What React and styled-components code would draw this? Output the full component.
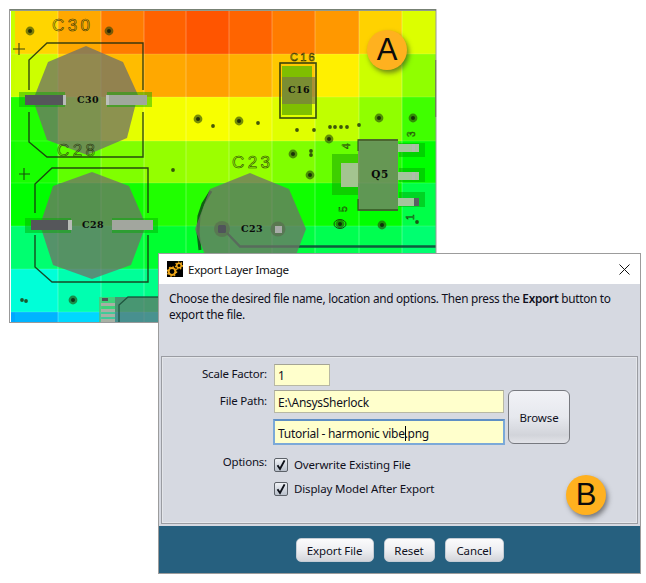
import React from "react";
import styled, { createGlobalStyle } from "styled-components";

const Global = createGlobalStyle`
  html, body { margin: 0; padding: 0; background: #fff; }
  #root { width: 646px; height: 583px; overflow: hidden; }
`;

const Canvas = styled.div`
  position: relative;
  width: 646px;
  height: 583px;
  background: #fff;
  font-family: "Noto Sans", "Open Sans", sans-serif;
`;

const BoardFrame = styled.svg`
  position: absolute;
  left: 9px;
  top: 9px;
  display: block;
`;

const Badge = styled.div`
  position: absolute;
  left: ${(p) => p.$x}px;
  top: ${(p) => p.$y}px;
  width: 40px;
  height: 40px;
  border-radius: 50%;
  background: #ffb11f;
  box-shadow: 2px 3px 5px rgba(40, 40, 40, 0.55);
  display: flex;
  align-items: center;
  justify-content: center;
  font-family: "Liberation Sans", sans-serif;
  font-size: 31px;
  color: #0c0c0c;
  z-index: 3;
`;

const Dialog = styled.div`
  position: absolute;
  left: 158px;
  top: 253px;
  width: 483px;
  height: 321px;
  box-sizing: border-box;
  border: 1px solid #9c9c9c;
  background: #d6d9e1;
  display: flex;
  flex-direction: column;
  color: #10101c;
  z-index: 2;
`;

const TitleBar = styled.div`
  height: 30px;
  flex: none;
  background: #fff;
  display: flex;
  align-items: center;
  padding: 0 8px;
  gap: 5px;
`;

const TitleText = styled.div`
  flex: 1;
  font-size: 11.6px;
  letter-spacing: -0.32px;
  color: #111;
`;

const CloseIcon = styled.svg`
  width: 11px;
  height: 11px;
  margin-right: 2px;
`;

const Intro = styled.p`
  margin: 0;
  height: 72px;
  flex: none;
  box-sizing: border-box;
  padding: 6px 20px 0 10px;
  font-size: 11.8px;
  line-height: 16px;
  letter-spacing: -0.28px;
  b { font-weight: 600; }
`;

const Panel = styled.div`
  flex: 1;
  margin: 0 2px 2px;
  border: 1px solid #9a9ca2;
  box-shadow: inset 0 0 0 1px #e4e6ea;
  padding: 7px 0 0 0;
  display: flex;
  flex-direction: column;
`;

const Row = styled.div`
  display: flex;
  align-items: flex-start;
  margin-bottom: ${(p) => p.$gap || 0}px;
`;

const Label = styled.div`
  width: 105px;
  flex: none;
  margin-right: 7px;
  text-align: right;
  font-size: 11.5px;
  line-height: 16px;
  letter-spacing: -0.2px;
  padding-top: ${(p) => p.$top || 0}px;
`;

const Field = styled.div`
  box-sizing: border-box;
  width: ${(p) => p.$w}px;
  height: ${(p) => p.$h}px;
  margin-left: ${(p) => p.$ml || 0}px;
  border: ${(p) => (p.$focus ? "2px solid #7ba9d8" : "1px solid #b8b8a4")};
  border-top-color: ${(p) => (p.$focus ? "#5f8fc4" : "#a4a494")};
  background: #ffffcc;
  font-size: 12px;
  line-height: ${(p) => p.$h - 2}px;
  padding: 1px 0 0 3px;
  letter-spacing: -0.28px;
  white-space: nowrap;
`;

const Caret = styled.span`
  display: inline-block;
  width: 1px;
  height: 15px;
  background: #000;
  vertical-align: -3px;
  margin: 0 -1px 0 0;
`;

const PathFields = styled.div`
  display: flex;
  flex-direction: column;
  gap: 6px;
`;

const PathGroup = styled.div`
  display: flex;
  align-items: flex-start;
  gap: 3px;
`;

const Browse = styled.button`
  width: 62px;
  height: 54px;
  box-sizing: border-box;
  padding: 0;
  border: 1px solid #77797f;
  border-radius: 6px;
  background: linear-gradient(#f1f2f6 0%, #e6e8ee 50%, #d2d4da 85%, #e2e3e8 100%);
  font: inherit;
  font-size: 11.5px;
  color: #10101c;
  letter-spacing: -0.1px;
`;

const Check = styled.label`
  display: flex;
  align-items: center;
  gap: 6px;
  padding-top: ${(p) => p.$pt || 0}px;
  font-size: 11.5px;
  line-height: 16px;
  letter-spacing: -0.15px;
`;

const Box = styled.span`
  width: 14px;
  height: 14px;
  box-sizing: border-box;
  border: 1px solid #5c6168;
  border-radius: 2px;
  background: linear-gradient(#f0f2f6, #b9c0cb);
  display: flex;
  align-items: center;
  justify-content: center;
`;

const Footer = styled.div`
  height: 47px;
  flex: none;
  background: #26607f;
  display: flex;
  justify-content: center;
  align-items: flex-start;
  padding-top: 12px;
  box-sizing: border-box;
  gap: 10px;
`;

const FootButton = styled.button`
  width: ${(p) => p.$w}px;
  height: 24px;
  box-sizing: border-box;
  padding: 0;
  border: 1px solid #c4ccd4;
  border-radius: 5px;
  background: linear-gradient(#fbfbfc 0%, #eeeff2 50%, #d3d5da 100%);
  font: inherit;
  font-size: 11.5px;
  letter-spacing: -0.1px;
  color: #10101c;
`;

const GearIcon = () => (
  <svg width="16" height="16" viewBox="0 0 16 16" style={{ flex: "none" }}>
    <rect width="16" height="16" fill="#000" />
    <circle cx="5" cy="10.5" r="3.4" fill="none" stroke="#f0a818" strokeWidth="2" />
    <circle cx="5" cy="10.5" r="4.6" fill="none" stroke="#f0a818" strokeWidth="1.4" strokeDasharray="1.6 2" />
    <circle cx="12" cy="4.5" r="2.3" fill="none" stroke="#f0a818" strokeWidth="1.6" />
    <circle cx="12" cy="4.5" r="3.5" fill="none" stroke="#f0a818" strokeWidth="1.2" strokeDasharray="1.4 1.6" />
  </svg>
);

const Tick = () => (
  <svg width="12" height="12" viewBox="0 0 12 12">
    <path d="M2.5 6.2 L5 10 L9.6 1.4" fill="none" stroke="#0d1018" strokeWidth="1.9" />
  </svg>
);

const xs = [11, 15, 58, 101, 144, 186, 229, 272, 315, 359, 402, 436];
const ys = [11, 54, 97, 141, 183, 226, 269, 312, 322];
const cells = [
  ["#c8ff00", "#ffd500", "#ffa800", "#ff7c00", "#ff6200", "#ff5500", "#ff6400", "#ff7c00", "#ff9800", "#ffd200", "#dcff00"],
  ["#c8ff00", "#ccff00", "#ffd800", "#ffbc00", "#ffa800", "#ffa000", "#ffb000", "#ffc800", "#fff000", "#ccff00", "#90ff00"],
  ["#20ff00", "#20ff00", "#a8ff00", "#e4ff00", "#f4ff00", "#f8ff00", "#f0ff00", "#e0ff00", "#c0ff00", "#90ff00", "#40ff00"],
  ["#12ff00", "#18ff00", "#60ff00", "#80ff00", "#94ff00", "#9cff00", "#94ff00", "#80ff00", "#68ff00", "#20ff00", "#00ff00"],
  ["#00ff00", "#00ff00", "#00f800", "#10ff00", "#20ff00", "#28ff00", "#20ff00", "#10ff00", "#08ff00", "#00ff00", "#00ff48"],
  ["#00ff70", "#00ff70", "#00ff58", "#00ff40", "#00ff30", "#00ff28", "#00ff30", "#00ff40", "#00ff50", "#00ff50", "#00ff70"],
  ["#00ffd8", "#00ffd8", "#00ffb0", "#00ff98", "#00ff88", "#00ff80", "#00ff80", "#00ff80", "#00ff80", "#00ff80", "#00ffa8"],
  ["#00a8ff", "#00b4ff", "#00d8ff", "#00e8ff", "#00f0ff", "#00f0ff", "#00f0ff", "#00f0ff", "#00f0ff", "#00f0ff", "#00f0ff"],
];

const bigVias = [
  [30, 31], [109, 31], [198, 119], [239, 121], [293, 154], [310, 175], [73, 300], [379, 118], [413, 118], [329, 139], [382, 225], [340, 224],
];
const smallVias = [
  [213, 126], [258, 123], [297, 130], [314, 130], [311, 151], [311, 155], [173, 170], [22, 300], [26, 301], [330, 127], [335, 127], [341, 127], [347, 127], [359, 125], [417, 222],
];

const GREY = "rgba(112,112,104,0.76)";
const LINE = "rgba(24,44,14,0.85)";
const PAD = "rgba(0,170,0,0.45)";

const Silk = ({ x, y, size = 17, spacing = 3.4, children }) => (
  <text x={x} y={y} fontFamily="Liberation Sans, sans-serif" fontSize={size} letterSpacing={spacing} fill="none" stroke="#26320c" strokeWidth="0.55">
    {children}
  </text>
);

const Ref = ({ x, y, size = 9.5, children }) => (
  <text x={x} y={y} textAnchor="middle" fontFamily="DejaVu Serif, serif" fontWeight="700" fontSize={size} letterSpacing="0.4" fill="#0a0a0a">
    {children}
  </text>
);

const Board = () => (
  <BoardFrame width="428" height="314" viewBox="9 9 428 314">
    <rect x="9" y="9" width="428" height="314" fill="#fff" />
    {cells.map((row, r) =>
      row.map((c, i) => (
        <rect key={`${r}-${i}`} x={xs[i]} y={ys[r]} width={xs[i + 1] - xs[i]} height={ys[r + 1] - ys[r]} fill={c} />
      ))
    )}
    {xs.slice(2, -1).map((x) => (
      <line key={x} x1={x} y1="11" x2={x} y2="322" stroke="rgba(255,255,255,0.28)" />
    ))}
    {ys.slice(1, -1).map((y) => (
      <line key={y} x1="11" y1={y} x2="436" y2={y} stroke="rgba(255,255,255,0.14)" />
    ))}

    {/* silkscreen frames */}
    <path d="M143 90V43H47L29 60V90M143 112V157H47L29 142V112" fill="none" stroke={LINE} strokeWidth="1.4" />
    <path d="M148 213V168H52L35 184V213M148 235V282H52L35 267V235" fill="none" stroke={LINE} strokeWidth="1.4" />
    <path d="M13 49H25M19 43V55M19 174H30M24 168V180" stroke={LINE} strokeWidth="1.1" fill="none" />

    {/* traces and dark copper */}
    <path d="M211 191 L203 204 L199 216 L198 232 L200 250" fill="none" stroke="rgba(10,70,20,0.85)" strokeWidth="3" />
    <path d="M227 233 L240 246.5 H436" fill="none" stroke="rgba(15,70,55,0.88)" strokeWidth="2.4" />

    {/* octagons */}
    <polygon points="86,46 123,62 138,95 127,138 87,155 47,140 33,100 48,62" fill={GREY} />
    <polygon points="92,172 129,186 146,225 131,265 92,279 53,265 40,225 53,186" fill={GREY} />
    <polygon points="250,173 289,189 306,229 291,268 250,286 210,268 195,229 210,189" fill={GREY} />

    {/* C30 pads */}
    <rect x="19" y="92" width="46" height="15" fill={PAD} />
    <rect x="107" y="92" width="45" height="15" fill={PAD} />
    <rect x="25" y="95" width="38" height="10" fill="#55565a" />
    <rect x="63" y="95" width="3" height="10" fill="#b8bcb8" />
    <rect x="106" y="95" width="3" height="10" fill="#bcc0bc" />
    <rect x="109" y="95" width="38" height="10" fill="#a0a89c" />
    <Ref x="88" y="103">C30</Ref>

    {/* C28 pads */}
    <rect x="25" y="218" width="46" height="15" fill={PAD} />
    <rect x="112" y="218" width="46" height="15" fill={PAD} />
    <rect x="31" y="220" width="37" height="10" fill="#55565a" />
    <rect x="68" y="220" width="4" height="10" fill="#b8bcb8" />
    <rect x="112" y="220" width="41" height="10" fill="#a2a69e" />
    <Ref x="93" y="228">C28</Ref>

    {/* C23 pads */}
    <circle cx="222" cy="229" r="8" fill="rgba(90,110,80,0.7)" />
    <rect x="218" y="225" width="8" height="8" rx="1.5" fill="#50545a" />
    <circle cx="278" cy="229" r="7.5" fill="rgba(90,110,80,0.7)" />
    <rect x="275" y="226" width="7" height="7" fill="#a8aca8" />
    <Ref x="252" y="232">C23</Ref>

    <Silk x="52" y="31">C30</Silk>
    <Silk x="57" y="156">C28</Silk>
    <Silk x="232" y="168">C23</Silk>
    <Silk x="290" y="61" size="11" spacing="2.2">C16</Silk>

    {/* C16 */}
    <rect x="282" y="66" width="30" height="49" fill="#7fbf00" />
    <rect x="282" y="77" width="33" height="27" fill="rgba(120,110,80,0.62)" />
    <rect x="280" y="63" width="36" height="55" fill="none" stroke={LINE} strokeWidth="1.6" />
    <Ref x="299" y="93">C16</Ref>

    {/* Q5 */}
    <rect x="332" y="154" width="26" height="41" fill="rgba(20,160,0,0.5)" />
    <rect x="341" y="163" width="17" height="24" fill="#a4c490" />
    <rect x="399" y="143" width="26" height="14" fill="rgba(0,170,0,0.5)" />
    <rect x="399" y="168" width="26" height="14" fill="rgba(0,170,0,0.5)" />
    <rect x="399" y="192" width="26" height="15" fill="rgba(0,170,0,0.5)" />
    <rect x="398" y="144" width="21" height="8" fill="#a4c49c" />
    <rect x="412" y="144" width="3" height="8" fill="#b0bcac" />
    <rect x="398" y="172" width="21" height="8" fill="#a4c49c" />
    <rect x="412" y="172" width="3" height="8" fill="#b0bcac" />
    <rect x="398" y="198" width="17" height="8" fill="#a4c49c" />
    <rect x="414" y="198" width="5" height="8" fill="#5a5e62" />
    <rect x="358" y="139" width="40" height="72" rx="1" fill="rgba(122,122,108,0.78)" />
    <path d="M358 151V140H398M358 199V210H398" fill="none" stroke="rgba(40,70,20,0.8)" strokeWidth="1.3" />
    <Ref x="380" y="178" size="10.5">Q5</Ref>
    <g fill="none" stroke="#26320c" strokeWidth="0.5" fontFamily="Liberation Sans, sans-serif" fontSize="10">
      <text transform="translate(415 137) rotate(-90)">3</text>
      <text transform="translate(350 149) rotate(-90)">4</text>
      <text transform="translate(347 212) rotate(-90)">5</text>
      <text transform="translate(414 220) rotate(-90)">1</text>
    </g>
    <ellipse cx="340" cy="224" rx="6" ry="4.5" fill="none" stroke={LINE} />

    {/* vias */}
    {bigVias.map(([x, y]) => (
      <g key={`${x}-${y}`}>
        <circle cx={x} cy={y} r="4.4" fill="rgba(40,70,10,0.62)" />
        <circle cx={x} cy={y} r="2" fill="rgba(10,20,10,0.75)" />
      </g>
    ))}
    {smallVias.map(([x, y]) => (
      <circle key={`${x}-${y}`} cx={x} cy={y} r="1.9" fill="rgba(30,50,10,0.82)" />
    ))}

    {/* bottom connector */}
    <rect x="99" y="297" width="16" height="25" fill="rgba(90,190,110,0.7)" />
    {[303, 309, 314, 319].map((y) => (
      <rect key={y} x="101" y={y} width="14" height="3" fill="#a8b0a4" />
    ))}
    <rect x="102" y="298" width="6" height="3" fill="#505458" />
    <polygon points="115,322 115,297 170,297 170,322" fill="rgba(100,110,100,0.72)" />
    <path d="M119 322V305L128 297H170" fill="none" stroke="rgba(20,70,50,0.8)" strokeWidth="1.3" />

    <rect x="435" y="60" width="1.2" height="57" fill="rgba(60,80,20,0.8)" />
    <rect x="9.5" y="9.5" width="426.5" height="313" fill="none" stroke="#999" />
    <line x1="10" y1="10" x2="436" y2="10" stroke="#6d7a68" strokeWidth="1.6" />
  </BoardFrame>
);

export default function App() {
  return (
    <Canvas>
      <Global />
      <Board />
      <Badge $x={367} $y={30}>A</Badge>
      <Dialog>
        <TitleBar>
          <GearIcon />
          <TitleText>Export Layer Image</TitleText>
          <CloseIcon viewBox="0 0 11 11">
            <path d="M0.5 0.5 L10.5 10.5 M10.5 0.5 L0.5 10.5" stroke="#111" strokeWidth="1" fill="none" />
          </CloseIcon>
        </TitleBar>
        <Intro>
          Choose the desired file name, location and options. Then press the <b>Export</b> button to export the file.
        </Intro>
        <Panel>
          <Row $gap={4}>
            <Label $top={2}>Scale Factor:</Label>
            <Field $w={56} $h={22}>1</Field>
          </Row>
          <Row $gap={8}>
            <Label $top={3}>File Path:</Label>
            <PathGroup>
              <PathFields>
                <Field $w={230} $h={23}>E:\AnsysSherlock</Field>
                <Field $w={232} $h={26} $ml={-1} $focus>Tutorial - harmonic vibe<Caret />.png</Field>
              </PathFields>
              <Browse>Browse</Browse>
            </PathGroup>
          </Row>
          <Row $gap={8}>
            <Label $top={1}>Options:</Label>
            <Check $pt={4}><Box><Tick /></Box>Overwrite Existing File</Check>
          </Row>
          <Row>
            <Label />
            <Check><Box><Tick /></Box>Display Model After Export</Check>
          </Row>
        </Panel>
        <Footer>
          <FootButton $w={78}>Export File</FootButton>
          <FootButton $w={51}>Reset</FootButton>
          <FootButton $w={59}>Cancel</FootButton>
        </Footer>
      </Dialog>
      <Badge $x={566} $y={475}>B</Badge>
    </Canvas>
  );
}
